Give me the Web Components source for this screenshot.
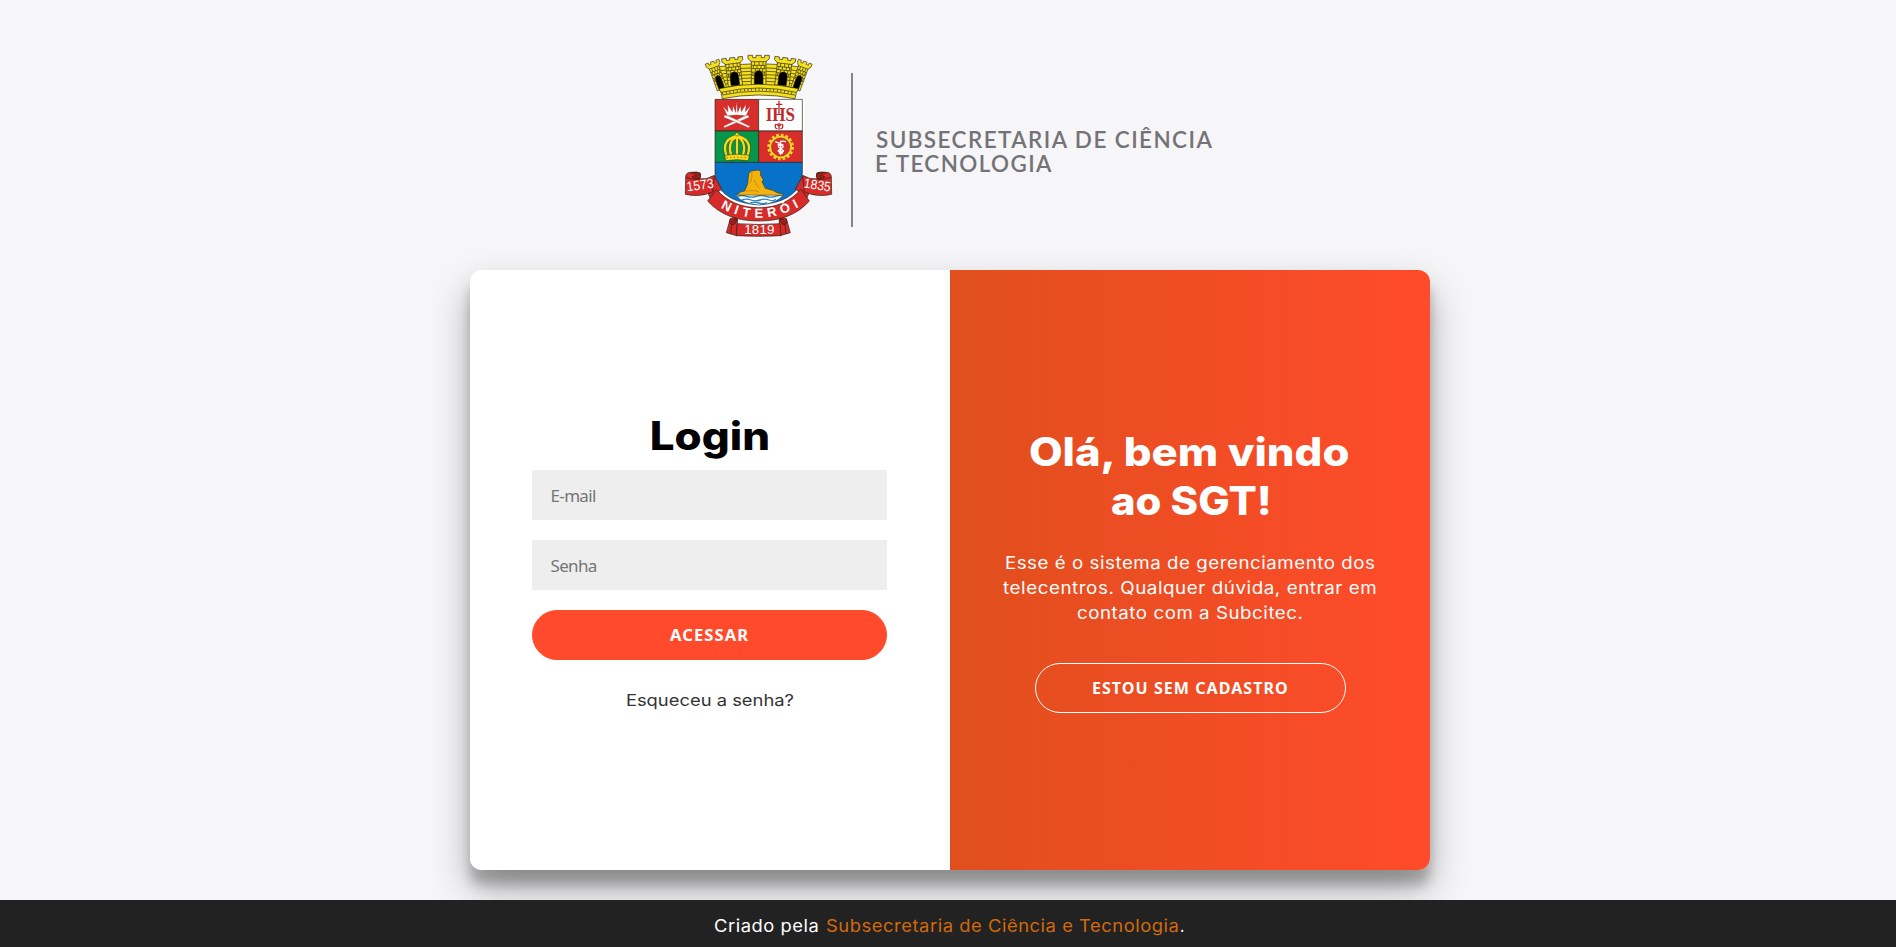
<!DOCTYPE html>
<html lang="pt-BR">
<head>
<meta charset="utf-8">
<title>SGT - Login</title>
<style>
body{margin:0;background:#f6f5f7;font-family:Inter,"Open Sans",sans-serif;overflow:hidden}
</style>
</head>
<body>
<sgt-page></sgt-page>
<script>
const define = (name, html) => customElements.define(name, class extends HTMLElement {
  constructor() {
    super();
    this.attachShadow({mode: 'open'}).innerHTML = html;
  }
});

/* A line of text whose visible glyphs span exactly the given width. */
customElements.define('fit-text', class extends HTMLElement {
  constructor() {
    super();
    this.attachShadow({mode: 'open'}).innerHTML =
      '<style>:host{display:inline-block;white-space:nowrap;text-align:left}span{display:inline-block;transform-origin:0 50%}</style><span><slot></slot></span>';
  }
  connectedCallback() {
    const w = +this.getAttribute('w');
    const cs = getComputedStyle(this);
    const c = document.createElement('canvas').getContext('2d');
    c.font = `${cs.fontWeight} ${cs.fontSize} ${cs.fontFamily}`;
    if (cs.letterSpacing !== 'normal') c.letterSpacing = cs.letterSpacing;
    const m = c.measureText(this.textContent);
    const k = w / (m.actualBoundingBoxLeft + m.actualBoundingBoxRight);
    this.style.width = w + 'px';
    this.shadowRoot.querySelector('span').style.transform =
      `translateX(${m.actualBoundingBoxLeft * k}px) scaleX(${k})`;
  }
});

const tower = (t) => `<g transform="${t}">
  <path fill="#f4e11c" d="M-32 0h14v7h10v-7h16v7h10v-7h14v10l-10 9v71h-44v-71l-10-9z"/>
  <path fill="none" stroke-width="2" d="M-24 19h48M-21 30h42M-21 40h42M-21 50h10m22 0h10M-21 60h7m28 0h7M-21 70h7m28 0h7M-12 19v11m13-11v11m12-11v11M-16 30v10m11-10v10m12-10v10m10-10v10M-10 40v8m12-8v8m10-8v10M-17 50v10m34-10v10"/>
  <path fill="#000" d="M-13 88V61q0-15 13-15t13 15v27z"/></g>`;
const scroll = `<path d="M104 398l15-4 21 38-34 28-8-18z"/><path d="M48 382q-16 0-16 14l-1 52q42 10 82-7l5-50q-24 14-44 10 4-5 2-17-10-5-28-2z"/>
  <path fill="#a51d1b" d="M46 384q25-4 29 3t-1 14q-18 4-22-6 6-5 14-2"/><path fill="none" d="M32 397q18 8 42 5"/>`;
const tail = `<path d="M166 521q10-7 22-1l-3 52-31-9z"/><path fill="#a51d1b" d="M166 521q-6 12 4 18 12 1 15-15-9-7-12 2"/><path fill="none" d="M170 539l-3 27"/>`;

define('city-crest', `<style>:host{display:block;width:170px;height:200px;flex:none}svg{display:block}</style>
<svg width="170" height="200" viewBox="0 0 510 600" stroke="#272016" stroke-width="2" stroke-linejoin="round">
  <path fill="#fff" stroke="none" d="M113 157h276v235q-8 92-138 101-130-9-138-101z"/>
  <path fill="#f4e11c" d="M112 68q139-24 278 0l-22 66q-117-28-234 0z"/>
  <path fill="none" stroke-width="2" d="M116 80q135-24 270 0M119 90q132-24 264 0M123 100q128-24 256 0M126 110q125-24 250 0M129 120q122-24 244 0"/>
  ${tower('translate(111 50) rotate(-20) scale(.68 .98)')}${tower('translate(391 50) rotate(20) scale(.68 .98)')}
  ${tower('translate(171 38) rotate(-7) scale(.98 .95)')}${tower('translate(331 38) rotate(7) scale(.98 .95)')}
  ${tower('translate(251 31)')}
  <path fill="#f4e11c" d="M132 131q119-27 239 0l-7 12-4 18q-109-22-218 0l-4-18z"/>
  <path fill="none" stroke-width="2" d="M138 142q113-26 226 0M142 150q109-23 218 0"/>
  <path fill="none" stroke-width="6" stroke-dasharray="2 9" d="M142 146q109-25 218 0"/>
  <path fill="#d82e2b" d="M120 163h131v95H120z"/><path fill="#fff" d="M251 163h131v95H251z"/>
  <path fill="#06964b" d="M120 258h131v95H120z"/><path fill="#d82e2b" d="M251 258h131v95H251z"/>
  <path fill="#0872c8" d="M120 352h262v33c-2 62-58 89-131 95-73-6-129-33-131-95z"/>
  <g stroke="#8d2927" stroke-width="1" fill="#fff">
    <path d="M157 213l-14-31 16 18-1-22 14 22 2-18 8 20 3-34 3 34 9-20 2 18 14-22-2 22 16-18-14 31q-28-6-56 0z"/>
    <path d="M145 244l62-30 12-4 4 7-10 4-64 27z"/><path d="M225 244l-62-30-14-4-3 7 11 4 64 27z"/>
  </g>
  <text x="316" y="228" text-anchor="middle" font-family="Liberation Serif,serif" font-weight="700" font-size="55" textLength="88" lengthAdjust="spacingAndGlyphs" fill="#be2b2b" stroke="none">IHS</text>
  <path d="M312 167v42M303 178h19M312 234v20m-7-17l7 7 7-7M303 237q-7 10 4 15m14-15q7 10-5 15" fill="none" stroke="#be2b2b" stroke-width="4"/>
  <g fill="none" stroke="#473c17" stroke-width="9"><path d="M155 332c-14-35 2-52 30-59M168 330c-9-31 0-46 16-55M186 330v-56M204 330c9-31 0-46-17-55M217 332c14-35-2-52-30-59"/></g>
  <g fill="none" stroke="#f5dc19" stroke-width="7"><path d="M155 332c-14-35 2-52 30-59M168 330c-9-31 0-46 16-55M186 330v-56M204 330c9-31 0-46-17-55M217 332c14-35-2-52-30-59"/></g>
  <path fill="#f5dc19" stroke-width="1.5" d="M149 331q37-7 74 0l-3 16q-34-6-68 0z"/><circle cx="186" cy="268" r="5" fill="#f5dc19" stroke-width="1"/>
  <path fill="none" stroke="#7d5a17" stroke-width="3" stroke-dasharray="4 7" d="M154 339q32-5 64 0"/>
  <circle cx="317" cy="306" r="36" fill="none" stroke="#f2d629" stroke-width="8" stroke-dasharray="8 6.1"/>
  <circle cx="317" cy="306" r="31" fill="none" stroke="#f2d629" stroke-width="6"/>
  <circle cx="317" cy="306" r="28" fill="none" stroke="#584018" stroke-width="1"/>
  <path d="M317 287v42M301 290q16 8 16 2t16-2M308 298q23 3 14 10t-12 9 14 7M325 298q-21 3-12 10t12 9-13 8" fill="none" stroke="#fff" stroke-width="4"/>
  <path fill="#fff" stroke="none" d="M183 450h141q-20 25-73 29-48-4-68-29z"/>
  <path d="M186 454q15-5 29 0t29 0 29 0 29 0 17-1M201 465q14-5 27 0t27 0 27 0 21-2M225 474q14-4 26 0t25-1" fill="none" stroke="#2884c9" stroke-width="4"/>
  <path fill="#f3b30c" stroke-width="1.5" d="M183 450l14-9 12-3 9-22 3-30 7-8 22-3 8 5-2 10 9 14-4 6 10 20 22 6 14 7 18 5v3z"/>
  <path d="M230 379q4 19-5 35m13-9q6 19 15 23m-40 11q25-6 40 3" fill="none" stroke="#b17d12" stroke-width="2"/>
  <g fill="#d72b29">
    ${scroll}<g transform="translate(501) scale(-1 1)">${scroll}</g>
    ${tail}<g transform="translate(500) scale(-1 1)">${tail}</g>
    <path d="M187 536q64 5 128 0l3 36q-66 4-134 0z"/>
    <path d="M124 433c33 37 74 55 127 55s94-18 127-55l25 35c-37 42-87 60-152 60s-115-18-153-60z"/>
  </g>
  <path id="motto" fill="none" stroke="none" d="M134 487Q251 551 373 485"/>
  <g fill="#fff" stroke="none" font-family="Liberation Sans,sans-serif">
    <text font-size="39" font-weight="700"><textPath href="#motto" startOffset="3" textLength="246" lengthAdjust="spacing">NITERÓI</textPath></text>
    <text font-size="40" x="208" y="568" textLength="90">1819</text>
    <text font-size="40" transform="translate(37 439) rotate(-8)" textLength="81" lengthAdjust="spacingAndGlyphs">1573</text>
    <text font-size="40" transform="translate(385 427) rotate(9)" textLength="81" lengthAdjust="spacingAndGlyphs">1835</text>
  </g>
</svg>`);

define('brand-header', `<style>
:host{display:flex;height:270px;padding:45px 0 0 675px;box-sizing:border-box}
.rule{width:1.6px;height:154px;margin:28px 0 0 6.3px;background:#858486}
.name{margin:83px 0 0 23.5px;font:600 22px/24px Lato,sans-serif;color:#737276;letter-spacing:1.4px;display:flex;flex-direction:column}
</style>
<city-crest></city-crest><div class="rule"></div>
<div class="name"><fit-text w="337.5">SUBSECRETARIA DE CIÊNCIA</fit-text><fit-text w="177">E TECNOLOGIA</fit-text></div>`);

define('text-field', `<style>
:host{display:block;height:50px;margin-bottom:20px}
input{display:block;width:100%;height:50px;box-sizing:border-box;border:0;padding:0 18px 0 18.5px;background:#eee;font:17px "Noto Sans",sans-serif;letter-spacing:-.65px;outline:0}
input::placeholder{color:#757575}
</style><input>`);

define('pill-button', `<style>
:host{display:block;height:50px}
button{display:flex;width:100%;height:50px;box-sizing:border-box;align-items:center;justify-content:center;border:1px solid #ff4b2b;border-radius:25px;background:#ff4b2b;color:#fff;font:700 15.5px/20px "Noto Sans",sans-serif;letter-spacing:1px;padding:0}
:host([ghost]) button{background:transparent;border-color:#fff}
</style><button><slot></slot></button>`);

define('login-form', `<style>
:host{display:flex;flex-direction:column;width:480px;box-sizing:border-box;padding:141px 63px 0 62px;background:#fff}
h1{margin:0 0 10px;height:49px;font:800 39px/49px Inter,sans-serif;color:#000;text-align:center}
a{margin-top:30px;padding-left:1px;text-align:center;font:400 16.5px/20px Inter,sans-serif;color:#333}
</style>
<h1><fit-text w="116">Login</fit-text></h1>
<text-field></text-field><text-field></text-field>
<pill-button><fit-text w="79">ACESSAR</fit-text></pill-button>
<a><fit-text w="166.5">Esqueceu a senha?</fit-text></a>`);

define('welcome-panel', `<style>
:host{display:flex;flex-direction:column;align-items:center;width:480px;box-sizing:border-box;padding-top:157px;background:linear-gradient(to right,#e04f1d,#ff4b2b);color:#fff}
h1{margin:0;font:800 39px/49px Inter,sans-serif;display:flex;flex-direction:column;align-items:center}
p{margin:26px 0 37px;display:flex;flex-direction:column;align-items:center;font:400 16.7px/25px Inter,sans-serif;letter-spacing:.5px;color:#fff}
p fit-text{margin-right:1px}
pill-button{width:311px}
</style>
<h1><fit-text w="320">Olá, bem vindo</fit-text><fit-text w="156.5">ao SGT!</fit-text></h1>
<p><fit-text w="368">Esse é o sistema de gerenciamento dos</fit-text><fit-text w="373">telecentros. Qualquer dúvida, entrar em</fit-text><fit-text w="225">contato com a Subcitec.</fit-text></p>
<pill-button ghost><fit-text w="194.5">ESTOU SEM CADASTRO</fit-text></pill-button>`);

define('login-card', `<style>
:host{display:flex;width:960px;height:600px;margin-left:470px;border-radius:12px;overflow:hidden;box-shadow:0 19px 38px rgba(0,0,0,.3),0 15px 12px rgba(0,0,0,.22)}
</style><login-form></login-form><welcome-panel></welcome-panel>`);

define('page-footer', `<style>
:host{display:flex;position:relative;height:47px;margin-top:30px;box-sizing:border-box;padding:14px 0 0 714px;background:#222;color:#fff;font:400 16.7px/25px Inter,sans-serif;letter-spacing:.5px}
a{color:#d56a0b;margin:0 2px 0 7.5px}
</style><fit-text w="104.5">Criado pela</fit-text><a><fit-text w="352.5">Subsecretaria de Ciência e Tecnologia</fit-text></a><fit-text w="2.7">.</fit-text>`);

define('sgt-page', `<style>:host{display:block;height:947px;overflow:hidden}</style>
<brand-header></brand-header><login-card></login-card><page-footer></page-footer>`);

const form = document.querySelector('sgt-page').shadowRoot.querySelector('login-card').shadowRoot.querySelector('login-form').shadowRoot;
form.querySelectorAll('text-field').forEach((f, i) => {
  const input = f.shadowRoot.querySelector('input');
  input.placeholder = ['E-mail', 'Senha'][i];
  input.type = ['email', 'password'][i];
});
</script>
</body>
</html>
